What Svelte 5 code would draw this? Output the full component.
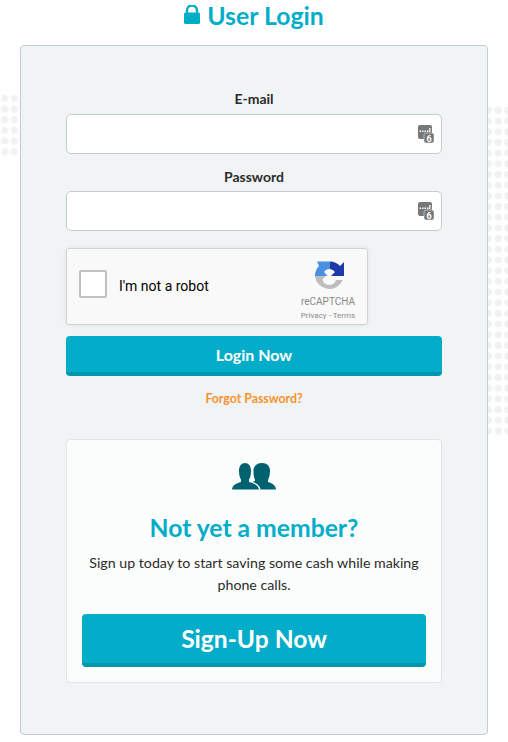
<script>
  const fields = ["E-mail", "Password"];
</script>

{#snippet keyIcon()}
  <svg class="key" width="16" height="18" viewBox="0 0 16 18">
    <rect x="0" y="0" width="14" height="14" rx="2" fill="#777" />
    <rect x="6" y="8" width="10" height="10" rx="2" fill="#777" stroke="#f4f4f4" stroke-width="0.5" />
    <rect x="1.500" y="5.500" width="1.500" height="1.500" fill="#fff" />
    <rect x="4" y="5.500" width="1.500" height="1.500" fill="#fff" />
    <rect x="6.500" y="5.500" width="1.500" height="1.500" fill="#fff" />
    <rect x="9" y="5.500" width="1.500" height="1.500" fill="#fff" />
    <rect x="11.200" y="3" width="1.300" height="4" fill="#fff" />
    <text x="11" y="16.800" text-anchor="middle" class="key-num">6</text>
  </svg>
{/snippet}

<div class="page">
  <h1>
    <svg width="16" height="19" viewBox="0 0 16 19">
      <path d="M3 8V5.500a5 5 0 0 1 10 0V8" fill="none" stroke="#03adc9" stroke-width="2.400" />
      <rect x="0" y="7.500" width="16" height="11.500" rx="1.500" fill="#03adc9" />
    </svg>
    User Login
  </h1>

  <div class="card">
    {#each fields as f}
      <label class="field">
        <span>{f}</span>
        <div class="input">
          <input type={f === "Password" ? "password" : "text"} />
          {@render keyIcon()}
        </div>
      </label>
    {/each}

    <div class="captcha">
      <div class="check"></div>
      <div class="robot">I'm not a robot</div>
      <div class="brand">
        <svg width="30" height="30" viewBox="0 0 30 30">
          <path d="M0 15A14 14 0 0 1 4 5L2 0.500H15V8A7 7 0 0 0 9 11L12.500 15Z" fill="#4a90e2" />
          <path d="M15 0.500A14 14 0 0 1 25 5L29 1V15H16L20 11A7 7 0 0 0 15 8Z" fill="#1c3aa9" />
          <path d="M0 15H10.500L7.500 18.500A7 7 0 0 0 21 19H27.800A14.500 14.500 0 0 1 0 15Z" fill="#bdbdbd" />
        </svg>
        <div class="name">reCAPTCHA</div>
        <div class="links">Privacy - Terms</div>
      </div>
    </div>

    <button class="btn login">Login Now</button>
    <a class="forgot" href="#forgot">Forgot Password?</a>

    <div class="member">
      <svg class="people" width="44" height="27" viewBox="0 0 44 27">
        <path d="M0 26.500C.5 22 4 20.500 9 19V16.500C7.500 14.500 7 11 7 7.500C7 3 9.500 0 13 0S19 3 19 7.500C19 11 18.500 14.500 17 16.500V19C22 20.500 26 22 27 26.500Z" fill="#00616f" />
        <path d="M23 17C21.500 14 21.500 10 21.500 7.500C21.500 3 25 0 30 0S38 3 38 7.500C38 10 37.500 14.500 36 17V19C40 20 43.500 22 44 26.500H28.500C28 22.500 24 20 20.500 19C22.500 18.500 23 18 23 17Z" fill="#00616f" />
      </svg>
      <h2>Not yet a member?</h2>
      <p>Sign up today to start saving some cash while making phone calls.</p>
      <button class="btn signup">Sign-Up Now</button>
    </div>
  </div>
</div>

<style>
  :global(body) {
    background: #fff;
  }

  .page {
    position: relative;
    height: 742px;
    overflow: hidden;
    font-family: Lato, "Open Sans", sans-serif;
    color: #2b2b2b;
  }

  /* dotted decoration behind the card */
  .page::before,
  .page::after {
    content: "";
    position: absolute;
    background-image: radial-gradient(circle, #f1f1f1 2.800px, #fafafa 3.800px, transparent 4.400px);
    background-size: 9.500px 10.700px;
  }

  .page::before {
    left: 0;
    top: 93px;
    width: 24px;
    height: 65px;
  }

  .page::after {
    right: 0;
    top: 105px;
    width: 24px;
    height: 330px;
  }

  h1 {
    position: relative;
    z-index: 1;
    margin: 0;
    height: 45px;
    padding-top: 2px;
    box-sizing: border-box;
    display: flex;
    justify-content: center;
    gap: 7px;
    font-size: 24.800px;
    line-height: 28px;
    font-weight: 700;
    color: #03adc9;
  }

  h1 svg {
    margin-top: 3px;
  }

  .card {
    position: relative;
    z-index: 1;
    margin: 0 20px;
    height: 690px;
    box-sizing: border-box;
    padding: 43px 45px 0;
    background: #f1f4f5;
    border: 1px solid #c3cdd1;
    border-radius: 4px;
    display: flex;
    flex-direction: column;
    align-items: stretch;
  }

  .field {
    display: block;
    margin-bottom: 14px;
    text-align: center;
    font-size: 14px;
    font-weight: 700;
  }

  .field span {
    display: block;
    line-height: 20px;
    height: 25px;
  }

  .field + .field span {
    height: 23px;
    line-height: 18px;
  }

  .input {
    position: relative;
    height: 40px;
  }

  input {
    width: 100%;
    height: 100%;
    box-sizing: border-box;
    background: #fff;
    border: 1px solid #c8cccf;
    border-radius: 5px;
    outline: none;
  }

  .key {
    position: absolute;
    right: 8px;
    top: 11px;
  }

  .key-num {
    font-family: Roboto, sans-serif;
    font-size: 9px;
    font-weight: 700;
    fill: #fff;
  }

  .captcha {
    margin-top: 3px;
    width: 302px;
    height: 77px;
    box-sizing: border-box;
    background: #f9f9f9;
    border: 1px solid #d3d3d3;
    border-radius: 3px;
    box-shadow: 0 0 4px rgba(0, 0, 0, 0.08);
    display: flex;
    align-items: center;
    padding: 0 10px 0 12px;
    font-family: Roboto, sans-serif;
  }

  .check {
    width: 24px;
    height: 24px;
    margin-bottom: 5px;
    background: #fff;
    border: 2px solid #c1c1c1;
    border-radius: 2px;
    flex: none;
  }

  .robot {
    margin-left: 12px;
    margin-bottom: 2px;
    font-size: 14px;
    color: #000;
  }

  .brand {
    margin-left: auto;
    width: 58px;
    display: flex;
    flex-direction: column;
    align-items: center;
    color: #8a8a8a;
    padding-top: 9px;
  }

  .brand svg {
    margin-left: 3px;
  }

  .name {
    margin-top: 4px;
    font-size: 10px;
    line-height: 13px;
  }

  .links {
    margin-top: 2px;
    font-size: 8px;
    line-height: 12px;
    white-space: nowrap;
  }

  .btn {
    display: block;
    border: none;
    border-bottom: 4px solid #0097ae;
    border-radius: 4px;
    background: #03adc9;
    color: #fff;
    font-family: inherit;
    font-weight: 700;
    text-align: center;
    padding: 0;
  }

  .login {
    margin-top: 11px;
    height: 40px;
    font-size: 16px;
  }

  .forgot {
    margin-top: 15px;
    text-align: center;
    font-size: 12.300px;
    line-height: 16px;
    font-weight: 700;
    color: #f7932e;
    text-decoration: none;
  }

  .member {
    margin-top: 32px;
    height: 244px;
    box-sizing: border-box;
    background: #fbfcfc;
    border: 1px solid #e1e5e7;
    border-radius: 4px;
    padding: 23px 15px 0;
    display: flex;
    flex-direction: column;
    align-items: center;
    text-align: center;
  }

  .people {
    flex: none;
  }

  h2 {
    margin: 24px 0 0;
    font-size: 24.700px;
    line-height: 28px;
    font-weight: 700;
    color: #03adc9;
  }

  p {
    margin: 10px 0 0;
    font-size: 14.200px;
    line-height: 22px;
  }

  .signup {
    margin-top: 18px;
    width: 100%;
    height: 53px;
    font-size: 24.600px;
    flex: none;
  }
</style>
